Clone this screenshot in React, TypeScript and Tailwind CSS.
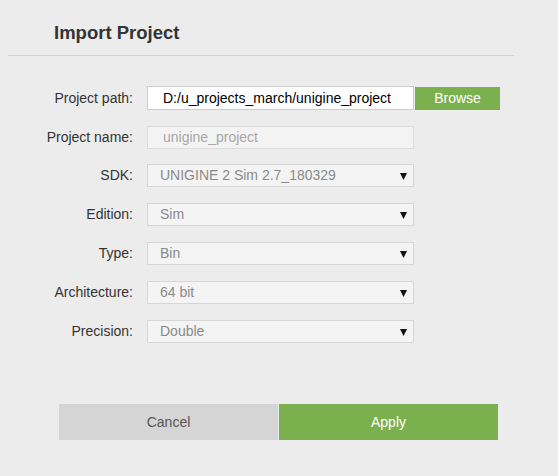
export default function App() {
  const selects = [
    { label: "SDK:", value: "UNIGINE 2 Sim 2.7_180329" },
    { label: "Edition:", value: "Sim" },
    { label: "Type:", value: "Bin" },
    { label: "Architecture:", value: "64 bit" },
    { label: "Precision:", value: "Double" },
  ];

  return (
    <div className="w-[558px] h-[476px] bg-[#ececec] font-['Liberation_Sans',Arial,sans-serif] text-[#333] overflow-hidden">
      {/* header */}
      <div className="mx-2 w-[506px] border-b border-[#d2d2d2] pl-[46px] pt-[21px] h-[56px]">
        <h1 className="text-[18.5px] font-bold leading-[24px] text-[#333]">Import Project</h1>
      </div>

      {/* form */}
      <div className="pt-[30px]">
        <div className="flex items-center h-[24px]">
          <label className="w-[133px] text-right text-[14px]">Project path:</label>
          <div className="ml-[14px] flex h-[24px]">
            <div className="w-[267px] h-[24px] bg-white border border-[#cccccc] pl-[15px] text-[14px] leading-[22px] text-black">
              D:/u_projects_march/unigine_project
            </div>
            <button className="ml-px w-[85px] h-[23px] mt-px bg-[#7bb04f] text-white text-[14px] leading-[23px]">Browse</button>
          </div>
        </div>

        <div className="flex items-center h-[23px] mt-[16px]">
          <label className="w-[133px] text-right text-[14px]">Project name:</label>
          <div className="ml-[14px] w-[267px] h-[23px] bg-[#f3f3f3] border border-[#dcdcdc] pl-[15px] text-[14px] leading-[21px] text-[#a8a8a8]">
            unigine_project
          </div>
        </div>

        <div className="mt-[15px] flex flex-col gap-[16px]">
          {selects.map((s) => (
            <div key={s.label} className="flex items-center h-[23px]">
              <label className="w-[133px] text-right text-[14px]">{s.label}</label>
              <div className="ml-[14px] w-[267px] h-[23px] bg-[#f4f4f4] border border-[#d6d6d6] pl-[12px] pr-[6px] flex items-center justify-between text-[14px] text-[#8a8a8a]">
                <span>{s.value}</span>
                <svg width="7" height="7" viewBox="0 0 7 7" className="mt-px">
                  <polygon points="0,0 7,0 3.5,7" fill="#111" />
                </svg>
              </div>
            </div>
          ))}
        </div>
      </div>

      {/* footer buttons */}
      <div className="mt-[61px] ml-[59px] flex">
        <button className="w-[219px] h-[36px] bg-[#d5d5d5] text-[#555] text-[14px]">Cancel</button>
        <button className="ml-px w-[219px] h-[36px] bg-[#7bb04f] text-white text-[14px]">Apply</button>
      </div>
    </div>
  );
}
